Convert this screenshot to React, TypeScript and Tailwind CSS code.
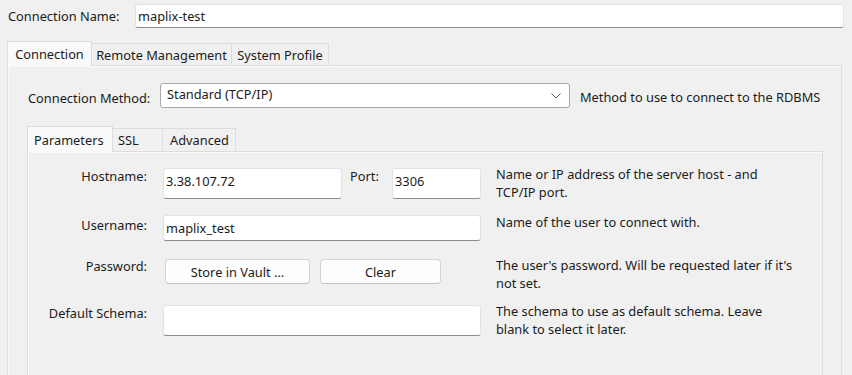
import React from 'react'

const field = "bg-white border border-[#e2e2e2] border-b-[#8d8d8d] rounded-[3px] flex items-center px-[2px]"
const btn = "h-[25px] bg-[#fdfdfd] border border-[#d4d4d4] border-b-[#c0c0c0] rounded-[4px] flex items-center justify-center"
const desc = "ml-[15px] -mt-[2px] leading-[17.5px]"

function Chevron() {
    return (
        <svg width="10" height="6" viewBox="0 0 10 6" className="text-[#606060]">
            <path d="M0.5 0.5 L5 5 L9.5 0.5" fill="none" stroke="currentColor" strokeWidth="1" />
        </svg>
    )
}

export default function App () {
    return (
        <div className="w-[852px] h-[375px] overflow-hidden bg-[#f0f0f0] text-[12.8px] leading-[16px] text-[#1b1b1b] font-['Noto_Sans',sans-serif]">
            {/* connection name */}
            <div className="flex items-center mt-[4px] h-[24px]">
                <div className="w-[135px] pl-[8px]">Connection Name:</div>
                <div className={`${field} w-[709px] h-[24px]`}>maplix-test</div>
            </div>

            {/* outer tabs */}
            <div className="mt-[12px] ml-[7px] w-[835px]">
                <div className="flex items-end h-[25px]">
                    <div className="w-[85px] h-[25px] bg-[#f9f9f9] border border-b-0 border-[#dcdcdc] flex items-center justify-center relative z-10 -mb-[1px]">Connection</div>
                    <div className="w-[140px] h-[22px] border border-l-0 border-b-0 border-[#dcdcdc] flex items-center justify-center">Remote Management</div>
                    <div className="w-[97px] h-[22px] border border-l-0 border-b-0 border-[#dcdcdc] flex items-center justify-center">System Profile</div>
                </div>
                <div className="h-[320px] border border-[#dcdcdc] shadow-[inset_1px_1px_0_#fafafa] pt-[17px]">
                    <div className="flex items-center">
                        <div className="w-[152px] pl-[20px] pt-[4px]">Connection Method:</div>
                        <div className="w-[410px] h-[25px] bg-white border border-[#a8a8a8] rounded-[3px] flex items-center justify-between pl-[6px] pr-[8px]">
                            <span className="-mt-[3px]">Standard (TCP/IP)</span>
                            <Chevron />
                        </div>
                        <div className="ml-[10px] pt-[2px]">Method to use to connect to the RDBMS</div>
                    </div>

                    {/* inner tabs */}
                    <div className="mt-[17px] ml-[19px] w-[796px]">
                        <div className="flex items-end h-[26px]">
                            <div className="w-[86px] h-[26px] bg-[#f9f9f9] border border-b-0 border-[#dcdcdc] flex items-center pl-[6px] relative z-10 -mb-[1px]">Parameters</div>
                            <div className="w-[50px] h-[23px] border border-l-0 border-b-0 border-[#dcdcdc] flex items-center pl-[5px]">SSL</div>
                            <div className="w-[73px] h-[23px] border border-l-0 border-b-0 border-[#dcdcdc] flex items-center pl-[7px]">Advanced</div>
                        </div>
                        <div className="h-[240px] border border-[#dcdcdc] shadow-[inset_1px_1px_0_#fafafa] pt-[16px]">
                            {/* hostname */}
                            <div className="flex items-start h-[31px]">
                                <div className="w-[119px] text-right">Hostname:</div>
                                <div className={`${field} ml-[16px] w-[179px] h-[31px]`}><span className="-mt-[6px]">3.38.107.72</span></div>
                                <div className="w-[50px] pl-[8px]">Port:</div>
                                <div className={`${field} w-[89px] h-[31px]`}><span className="-mt-[6px]">3306</span></div>
                                <div className={desc}>Name or IP address of the server host - and<br />TCP/IP port.</div>
                            </div>
                            {/* username */}
                            <div className="flex items-start h-[26px] mt-[16px]">
                                <div className="w-[119px] text-right pt-[2px]">Username:</div>
                                <div className={`${field} ml-[16px] w-[318px] h-[26px]`}>maplix_test</div>
                                <div className="ml-[15px] -mt-[1px]">Name of the user to connect with.</div>
                            </div>
                            {/* password */}
                            <div className="flex items-start h-[25px] mt-[18px]">
                                <div className="w-[119px] text-right -mt-[1px]">Password:</div>
                                <div className={`${btn} ml-[18px] w-[145px]`}>Store in Vault ...</div>
                                <div className={`${btn} ml-[10px] w-[121px]`}>Clear</div>
                                <div className="ml-[55px] -mt-[2px] leading-[17.5px]">The user's password. Will be requested later if it's<br />not set.</div>
                            </div>
                            {/* schema */}
                            <div className="flex items-start h-[31px] mt-[21px]">
                                <div className="w-[119px] text-right">Default Schema:</div>
                                <div className={`${field} ml-[16px] w-[318px] h-[31px]`}></div>
                                <div className={desc}>The schema to use as default schema. Leave<br />blank to select it later.</div>
                            </div>
                        </div>
                    </div>
                </div>
            </div>
        </div>
    )
}
